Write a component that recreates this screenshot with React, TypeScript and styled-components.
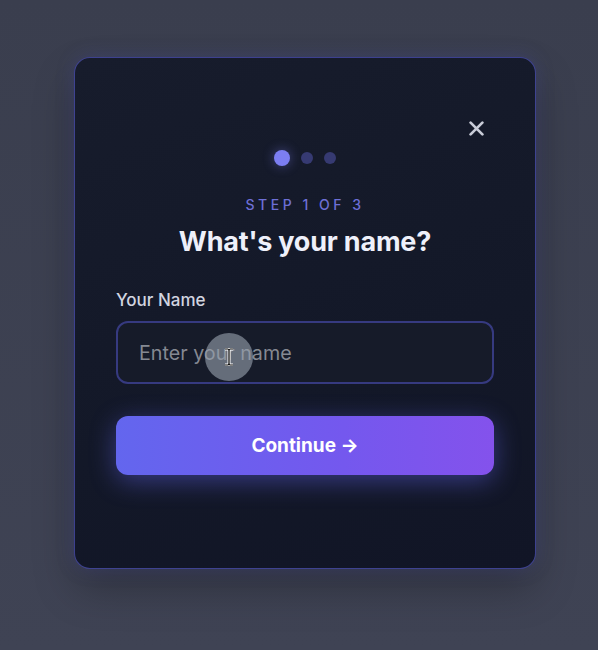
import React from "react";
import styled, { createGlobalStyle } from "styled-components";

const Global = createGlobalStyle`
  html, body { margin: 0; padding: 0; }
  body {
    background: linear-gradient(180deg, #3a3e4e 0%, #3f4354 100%);
    min-height: 650px;
    font-family: Inter, "Noto Sans", sans-serif;
    -webkit-font-smoothing: antialiased;
  }
`;

const Page = styled.div`
  display: flex;
  justify-content: flex-start;
  padding: 57px 0 0 74px;
  height: 650px;
  box-sizing: border-box;
`;

const Card = styled.div`
  position: relative;
  width: 462px;
  height: 512px;
  box-sizing: border-box;
  padding: 92px 41px 0;
  border-radius: 16px;
  background: linear-gradient(160deg, #171c2c 0%, #131828 60%, #111526 100%);
  border: 1px solid rgba(96, 100, 230, 0.55);
  box-shadow: 0 0 18px rgba(80, 84, 200, 0.25), 0 20px 40px rgba(0, 0, 0, 0.25);
  display: flex;
  flex-direction: column;
  align-items: stretch;
`;

const CloseButton = styled.button`
  position: absolute;
  top: 60px;
  right: 49px;
  width: 20px;
  height: 20px;
  padding: 0;
  border: none;
  background: transparent;
  display: flex;
  align-items: center;
  justify-content: center;
  cursor: pointer;
`;

const Dots = styled.div`
  display: flex;
  align-items: center;
  justify-content: center;
  gap: 11px;
  height: 16px;
`;

const Dot = styled.span<{ $active?: boolean }>`
  width: ${(p) => (p.$active ? 16 : 12)}px;
  height: ${(p) => (p.$active ? 16 : 12)}px;
  border-radius: 50%;
  background: ${(p) => (p.$active ? "#7c7ef2" : "#363a72")};
  box-shadow: ${(p) => (p.$active ? "0 0 12px rgba(124,126,242,0.45)" : "none")};
`;

const Step = styled.div`
  margin-top: 29px;
  text-align: center;
  font-size: 14px;
  line-height: 20px;
  letter-spacing: 3.5px;
  font-weight: 500;
  color: #6d6fd6;
`;

const Title = styled.h1`
  margin: 11px 0 0;
  text-align: center;
  font-size: 27px;
  line-height: 32px;
  font-weight: 700;
  color: #eef0fa;
  letter-spacing: -0.2px;
`;

const Label = styled.label`
  margin-top: 32px;
  font-size: 17px;
  line-height: 20px;
  font-weight: 500;
  color: #d2d5e0;
`;

const InputWrap = styled.div`
  position: relative;
  margin-top: 11px;
`;

const Input = styled.input`
  width: 100%;
  height: 63px;
  box-sizing: border-box;
  border-radius: 12px;
  border: 2px solid #363a80;
  background: #161b29;
  padding: 0 21px;
  font-family: Inter, "Noto Sans", sans-serif;
  font-size: 19.7px;
  color: #e6e8f0;
  outline: none;
  &::placeholder { color: #858992; }
`;

const CursorHalo = styled.div`
  position: absolute;
  left: 89px;
  top: 12px;
  width: 48px;
  height: 48px;
  border-radius: 50%;
  background: rgba(150, 160, 172, 0.62);
  display: flex;
  align-items: center;
  justify-content: center;
  pointer-events: none;
`;

const Button = styled.button`
  margin-top: 32px;
  height: 59px;
  border: none;
  border-radius: 12px;
  background: linear-gradient(90deg, #6366ee 0%, #7458ee 60%, #8452ec 100%);
  box-shadow: 0 6px 26px rgba(99, 102, 241, 0.45);
  color: #ffffff;
  font-family: Inter, "Noto Sans", sans-serif;
  font-size: 19px;
  font-weight: 700;
  cursor: pointer;
  display: flex;
  align-items: center;
  justify-content: center;
  gap: 6px;
`;

export default function App() {
  return (
    <>
      <Global />
      <Page>
        <Card>
          <CloseButton aria-label="Close">
            <svg width="15" height="15" viewBox="0 0 14 14">
              <path d="M1.5 1.5 L12.5 12.5 M12.5 1.5 L1.5 12.5" stroke="#c9ccd8" strokeWidth="2.5" strokeLinecap="round" />
            </svg>
          </CloseButton>
          <Dots>
            <Dot $active />
            <Dot />
            <Dot />
          </Dots>
          <Step>STEP 1 OF 3</Step>
          <Title>What's your name?</Title>
          <Label htmlFor="name">Your Name</Label>
          <InputWrap>
            <Input id="name" placeholder="Enter your name" />
            <CursorHalo>
              <svg width="10" height="18" viewBox="0 0 10 18">
                <path d="M1 1 H4 Q5 1 5 3 V15 Q5 17 4 17 H1 M9 1 H6 Q5 1 5 3 M5 15 Q5 17 6 17 H9" stroke="#fff" strokeWidth="3" fill="none" />
                <path d="M1 1 H4 Q5 1 5 3 V15 Q5 17 4 17 H1 M9 1 H6 Q5 1 5 3 M5 15 Q5 17 6 17 H9" stroke="#000" strokeWidth="1.2" fill="none" />
              </svg>
            </CursorHalo>
          </InputWrap>
          <Button>Continue →</Button>
        </Card>
      </Page>
    </>
  );
}
